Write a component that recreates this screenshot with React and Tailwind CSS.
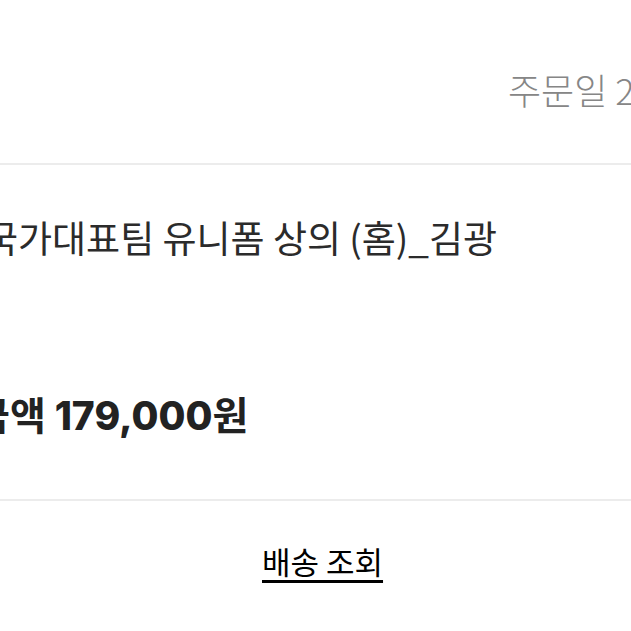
export default function App() {
  const kr = { fontFamily: '"Noto Sans CJK KR", "Noto Sans", sans-serif' };
  return (
    <div className="w-[631px] h-[631px] overflow-hidden bg-white" style={kr}>
      <div className="h-[163px] pt-[66px] pl-[508px] whitespace-nowrap">
        <span className="text-[36px] leading-[46px] text-[#868686] font-light">주문일 2</span>
      </div>
      <div className="h-[2px] bg-[#ececec]" />
      <div className="h-[334px] whitespace-nowrap">
        <div className="pt-[49px] -ml-[16px] text-[37px] leading-[47px] text-[#2b2b2b]">
          국가대표팀 유니폼 상의 (홈)_김광
        </div>
        <div className="pt-[128px] -ml-[26px] text-[39px] leading-[48px] font-bold text-[#222]">
          금액 <span style={{ fontFamily: 'Inter, "Noto Sans CJK KR", sans-serif' }} className="font-extrabold">179,000</span>원
        </div>
      </div>
      <div className="h-[2px] bg-[#ececec]" />
      <div className="pt-[40px] pl-[262px]">
        <span className="text-[31px] leading-[40px] text-black underline decoration-[3px] underline-offset-[6px]">배송 조회</span>
      </div>
    </div>
  );
}
